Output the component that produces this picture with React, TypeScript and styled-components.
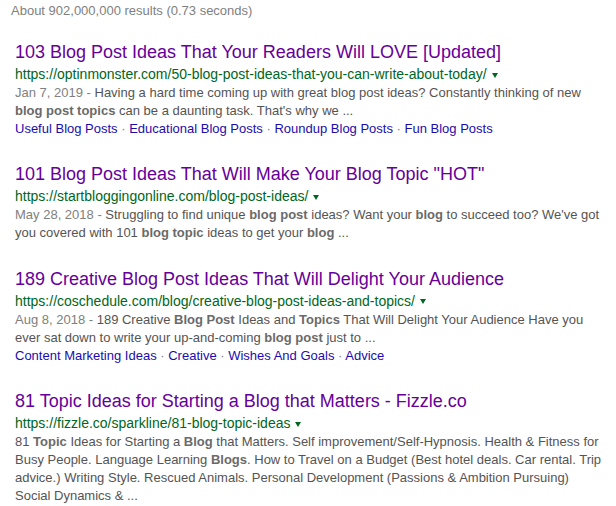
import React from "react";
import styled, { createGlobalStyle } from "styled-components";

const GlobalStyle = createGlobalStyle`
  html, body {
    margin: 0;
    padding: 0;
    background: #ffffff;
  }
  body {
    font-family: "Liberation Sans", Arial, sans-serif;
  }
`;

const Page = styled.div`
  width: 616px;
  min-height: 506px;
  padding-top: 2px;
  box-sizing: border-box;
  font-family: "Liberation Sans", Arial, sans-serif;
  overflow: hidden;
`;

const Stats = styled.div`
  padding-left: 11px;
  font-size: 13px;
  line-height: 18px;
  color: #808080;
  white-space: nowrap;
`;

const ResultList = styled.div`
  display: flex;
  flex-direction: column;
  gap: 25.4px;
  margin-top: 21px;
  padding-left: 15px;
`;

const Result = styled.div`
  display: flex;
  flex-direction: column;
`;

const Title = styled.a`
  display: block;
  font-size: 18px;
  line-height: 23px;
  color: #660099;
  text-decoration: none;
  white-space: nowrap;
  cursor: pointer;
`;

const UrlRow = styled.div`
  display: flex;
  align-items: center;
  height: 20px;
  font-size: 14px;
  line-height: 20px;
  color: #006621;
  white-space: nowrap;
`;

const DropArrow = styled.span`
  display: inline-block;
  width: 0;
  height: 0;
  margin-left: 5px;
  margin-top: 2px;
  border-top: 5px solid #006621;
  border-left: 3.5px solid transparent;
  border-right: 3.5px solid transparent;
`;

const Snippet = styled.div`
  font-size: 13px;
  line-height: 18px;
  color: #545454;
`;

const SnippetLine = styled.div`
  white-space: nowrap;
`;

const DateText = styled.span`
  color: #808080;
`;

const Em = styled.b`
  color: #6a6a6a;
  font-weight: bold;
`;

const Sitelinks = styled.div`
  font-size: 13px;
  line-height: 18px;
  white-space: nowrap;
`;

const Sitelink = styled.a`
  color: #1a0dab;
  text-decoration: none;
  cursor: pointer;
`;

const Dot = styled.span`
  color: #808080;
`;

type Seg = string | { b: string };
type Line = Seg[];

interface ResultData {
  title: string;
  url: string;
  date?: string;
  lines: Line[];
  sitelinks?: string[];
}

const results: ResultData[] = [
  {
    title: "103 Blog Post Ideas That Your Readers Will LOVE [Updated]",
    url: "https://optinmonster.com/50-blog-post-ideas-that-you-can-write-about-today/",
    date: "Jan 7, 2019 - ",
    lines: [
      [
        "Having a hard time coming up with great blog post ideas? Constantly thinking of new",
      ],
      [{ b: "blog post topics" }, " can be a daunting task. That's why we ..."],
    ],
    sitelinks: [
      "Useful Blog Posts",
      "Educational Blog Posts",
      "Roundup Blog Posts",
      "Fun Blog Posts",
    ],
  },
  {
    title: '101 Blog Post Ideas That Will Make Your Blog Topic "HOT"',
    url: "https://startbloggingonline.com/blog-post-ideas/",
    date: "May 28, 2018 - ",
    lines: [
      [
        "Struggling to find unique ",
        { b: "blog post" },
        " ideas? Want your ",
        { b: "blog" },
        " to succeed too? We've got",
      ],
      [
        "you covered with 101 ",
        { b: "blog topic" },
        " ideas to get your ",
        { b: "blog" },
        " ...",
      ],
    ],
  },
  {
    title: "189 Creative Blog Post Ideas That Will Delight Your Audience",
    url: "https://coschedule.com/blog/creative-blog-post-ideas-and-topics/",
    date: "Aug 8, 2018 - ",
    lines: [
      [
        "189 Creative ",
        { b: "Blog Post" },
        " Ideas and ",
        { b: "Topics" },
        " That Will Delight Your Audience Have you",
      ],
      [
        "ever sat down to write your up-and-coming ",
        { b: "blog post" },
        " just to ...",
      ],
    ],
    sitelinks: ["Content Marketing Ideas", "Creative", "Wishes And Goals", "Advice"],
  },
  {
    title: "81 Topic Ideas for Starting a Blog that Matters - Fizzle.co",
    url: "https://fizzle.co/sparkline/81-blog-topic-ideas",
    lines: [
      [
        "81 ",
        { b: "Topic" },
        " Ideas for Starting a ",
        { b: "Blog" },
        " that Matters. Self improvement/Self-Hypnosis. Health & Fitness for",
      ],
      [
        "Busy People. Language Learning ",
        { b: "Blogs" },
        ". How to Travel on a Budget (Best hotel deals. Car rental. Trip",
      ],
      [
        "advice.) Writing Style. Rescued Animals. Personal Development (Passions & Ambition Pursuing)",
      ],
      ["Social Dynamics & ..."],
    ],
  },
];

const renderSeg = (s: Seg, i: number) =>
  typeof s === "string" ? <React.Fragment key={i}>{s}</React.Fragment> : <Em key={i}>{s.b}</Em>;

export default function App() {
  return (
    <>
      <GlobalStyle />
      <Page>
        <Stats>About 902,000,000 results (0.73 seconds)</Stats>
        <ResultList>
          {results.map((r, idx) => (
            <Result key={idx}>
              <Title>{r.title}</Title>
              <UrlRow>
                <span>{r.url}</span>
                <DropArrow />
              </UrlRow>
              <Snippet>
                {r.lines.map((line, li) => (
                  <SnippetLine key={li}>
                    {li === 0 && r.date ? <DateText>{r.date}</DateText> : null}
                    {line.map(renderSeg)}
                  </SnippetLine>
                ))}
              </Snippet>
              {r.sitelinks && (
                <Sitelinks>
                  {r.sitelinks.map((s, si) => (
                    <React.Fragment key={si}>
                      {si > 0 && <Dot> · </Dot>}
                      <Sitelink>{s}</Sitelink>
                    </React.Fragment>
                  ))}
                </Sitelinks>
              )}
            </Result>
          ))}
        </ResultList>
      </Page>
    </>
  );
}
